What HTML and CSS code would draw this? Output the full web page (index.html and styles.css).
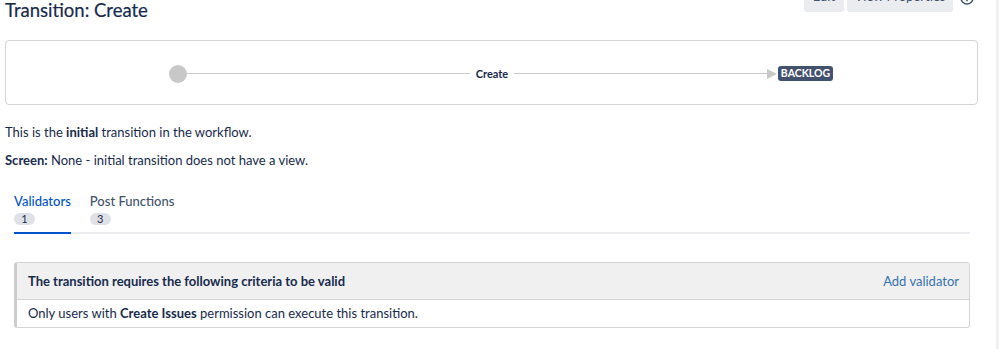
FILE: index.html
```html
<!DOCTYPE html>
<html>
<head>
<meta charset="utf-8">
<link rel="stylesheet" href="styles.css">
</head>
<body>
<div class="page">
  <header class="header">
    <h1 class="title">Transition: Create</h1>
    <div class="actions">
      <button class="btn">Edit</button>
      <button class="btn">View Properties</button>
      <span class="help">
        <svg width="14" height="14" viewBox="0 0 14 14"><circle cx="7" cy="7" r="6" fill="none" stroke="#42526e" stroke-width="1.5"/><path d="M7 6.2v4" stroke="#42526e" stroke-width="1.6"/><circle cx="7" cy="4.2" r="0.9" fill="#42526e"/></svg>
      </span>
    </div>
  </header>

  <div class="diagram">
    <div class="graph">
      <span class="node-start"></span>
      <span class="edge edge-left"></span>
      <span class="edge-label">Create</span>
      <span class="edge edge-right"></span>
      <span class="arrow"></span>
      <span class="status">BACKLOG</span>
    </div>
  </div>

  <p class="info">This is the <b>initial</b> transition in the workflow.</p>
  <p class="info screen"><b>Screen:</b> None - initial transition does not have a view.</p>

  <div class="tabs">
    <div class="tab active">
      <span class="tab-label">Validators</span>
      <span class="count">1</span>
    </div>
    <div class="tab">
      <span class="tab-label">Post Functions</span>
      <span class="count">3</span>
    </div>
  </div>

  <div class="panel">
    <div class="panel-head">
      <span class="panel-title">The transition requires the following criteria to be valid</span>
      <a class="panel-link">Add validator</a>
    </div>
    <div class="panel-body">Only users with <b>Create Issues</b> permission can execute this transition.</div>
  </div>
</div>
<div class="scrollbar"></div>
</body>
</html>
```

FILE: styles.css
```css
html, body {
  margin: 0;
  padding: 0;
  background: #fff;
  overflow: hidden;
}
body {
  font-family: Lato, "Noto Sans", sans-serif;
  font-size: 13px;
  color: #172b4d;
}
.page {
  padding: 0 21px 0 5px;
}
.header {
  display: flex;
  justify-content: space-between;
  align-items: flex-end;
  height: 32px;
  margin-top: -20px;
}
.title {
  margin: 0 0 -8px 0;
  font-size: 18.5px;
  font-weight: 400;
  line-height: 20px;
  color: #172b4d;
  -webkit-text-stroke: 0.2px #172b4d;
}
.actions {
  display: flex;
  align-items: center;
  gap: 3px;
  height: 32px;
}
.btn {
  height: 32px;
  border: 0;
  border-radius: 3px;
  background: #ebecf0;
  color: #42526e;
  font-family: inherit;
  font-size: 13px;
  padding: 0;
}
.btn:first-child { width: 40px; }
.btn:nth-child(2) { width: 106px; }
.help {
  display: flex;
  margin-left: 4px;
  margin-top: 4px;
  margin-right: 4px;
}
.diagram {
  margin-top: 28px;
  height: 63px;
  border: 1px solid #d4d4d4;
  border-radius: 4px;
  display: flex;
  align-items: center;
}
.graph {
  display: flex;
  align-items: center;
  padding-left: 163px;
  margin-top: 2px;
}
.node-start {
  width: 18px;
  height: 18px;
  border-radius: 50%;
  background: #c8c8c8;
}
.edge {
  height: 1px;
  background: #c8c8c8;
}
.edge-left { width: 283px; }
.edge-right { width: 253px; }
.edge-label {
  font-size: 11px;
  font-weight: 700;
  color: #172b4d;
  padding: 0 5px;
  width: 34px;
  text-align: center;
}
.arrow {
  width: 0;
  height: 0;
  border-top: 5px solid transparent;
  border-bottom: 5px solid transparent;
  border-left: 10px solid #c8c8c8;
  margin-right: 1px;
}
.status {
  background: #42526e;
  color: #fff;
  font-size: 10.5px;
  font-weight: 700;
  border-radius: 3px;
  width: 55px;
  height: 15px;
  line-height: 15px;
  text-align: center;
}
.info {
  margin: 17px 0 0 0;
  line-height: 20px;
}
.info.screen { margin-top: 8px; }
.tabs {
  display: flex;
  gap: 19px;
  margin: 22px 8px 0 9px;
  border-bottom: 2px solid #ebecf0;
}
.tab {
  display: flex;
  flex-direction: column;
  align-items: flex-start;
  padding-bottom: 7px;
  margin-bottom: -2px;
  border-bottom: 2px solid transparent;
}
.tab.active {
  border-bottom-color: #0052cc;
}
.tab-label {
  line-height: 18px;
  color: #42526e;
  font-weight: 500;
}
.tab.active .tab-label { color: #0052cc; }
.count {
  margin-top: 3px;
  width: 21px;
  height: 12px;
  line-height: 12px;
  border-radius: 6px;
  background: #dfe1e6;
  color: #172b4d;
  font-size: 11px;
  text-align: center;
}
.panel {
  margin: 28px 8px 0 9px;
  border: 1px solid #d4d4d4;
  border-left: 3px solid #cccccc;
  border-radius: 3px;
}
.panel-head {
  display: flex;
  justify-content: space-between;
  align-items: center;
  height: 36px;
  background: #f0f0f0;
  border-bottom: 1px solid #d4d4d4;
  padding: 0 10px 0 11px;
}
.panel-title { font-weight: 700; }
.panel-link { color: #3572b0; }
.panel-body {
  height: 27px;
  line-height: 27px;
  padding-left: 11px;
}
.scrollbar {
  position: fixed;
  top: 0;
  right: 0;
  width: 3px;
  height: 100%;
  background: #f1f1f1;
}
```
